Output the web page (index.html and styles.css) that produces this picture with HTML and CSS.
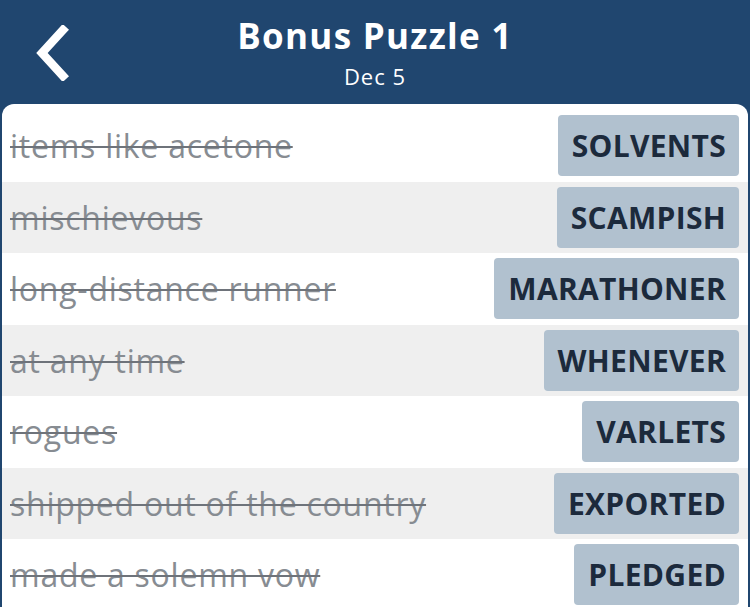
FILE: index.html
```html
<!DOCTYPE html>
<html>
<head>
<meta charset="utf-8">
<link rel="stylesheet" href="styles.css">
</head>
<body>
<div class="app">
  <header class="header">
    <div class="back">
      <svg width="40" height="56" viewBox="0 0 40 56"><path d="M31 5 L10 28 L31 51" fill="none" stroke="#fff" stroke-width="8.5" stroke-linecap="square" stroke-linejoin="miter"/></svg>
    </div>
    <div class="titles">
      <div class="title">Bonus Puzzle 1</div>
      <div class="subtitle">Dec 5</div>
    </div>
  </header>
  <main class="card">
    <div class="row"><span class="clue">items like acetone</span><span class="tile">SOLVENTS</span></div>
    <div class="row alt"><span class="clue">mischievous</span><span class="tile">SCAMPISH</span></div>
    <div class="row"><span class="clue">long-distance runner</span><span class="tile">MARATHONER</span></div>
    <div class="row alt"><span class="clue">at any time</span><span class="tile">WHENEVER</span></div>
    <div class="row"><span class="clue">rogues</span><span class="tile">VARLETS</span></div>
    <div class="row alt"><span class="clue">shipped out of the country</span><span class="tile">EXPORTED</span></div>
    <div class="row"><span class="clue">made a solemn vow</span><span class="tile">PLEDGED</span></div>
  </main>
</div>
</body>
</html>
```
FILE: styles.css
```css
* { box-sizing: border-box; }
html, body { margin: 0; padding: 0; }
body {
  width: 750px;
  height: 607px;
  overflow: hidden;
  background: #20466f;
  font-family: "Open Sans", "Lato", sans-serif;
}
.app { display: flex; flex-direction: column; height: 607px; }
.header {
  height: 104px;
  background: #20466f;
  position: relative;
  display: flex;
  justify-content: center;
  color: #fff;
}
.back {
  position: absolute;
  left: 32px;
  top: 25px;
}
.titles {
  display: flex;
  flex-direction: column;
  align-items: center;
  padding-top: 12px;
}
.title {
  font-size: 35px;
  font-weight: 700;
  line-height: 48px;
  letter-spacing: 1.3px;
}
.subtitle {
  font-size: 22px;
  line-height: 30px;
  letter-spacing: 1px;
  margin-top: 1px;
}
.card {
  flex: 1;
  margin: 0 2px;
  background: #fff;
  border-radius: 12px 12px 0 0;
  padding-top: 6px;
  overflow: hidden;
}
.row {
  height: 71.5px;
  display: flex;
  align-items: center;
  justify-content: space-between;
  padding: 0 9px 0 8px;
}
.row.alt { background: #efefef; }
.clue {
  font-size: 32px;
  letter-spacing: 0.75px;
  color: #878c92;
  text-decoration: line-through;
  text-decoration-thickness: 2px;
  text-decoration-color: #6e737a;
}
.tile {
  height: 61px;
  display: flex;
  align-items: center;
  padding: 0 13px 0 14px;
  background: #b1c1cf;
  color: #1c2a3c;
  font-size: 30px;
  font-weight: 700;
  letter-spacing: 0.3px;
  border-radius: 4px;
}
```
